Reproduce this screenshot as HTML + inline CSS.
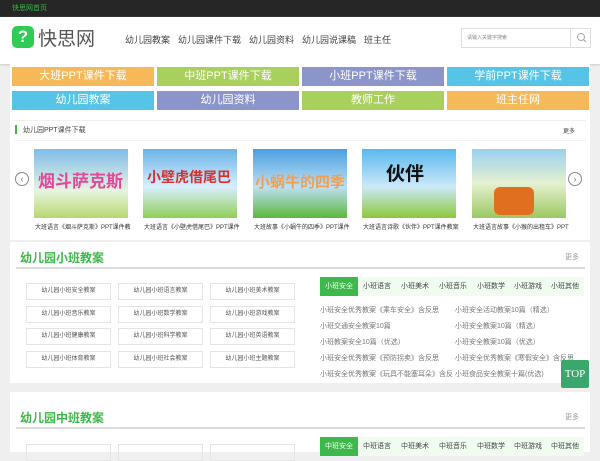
<!DOCTYPE html><html><head><meta charset="utf-8"><style>
*{margin:0;padding:0;box-sizing:border-box}
body{width:600px;height:450px;overflow:hidden;background:#efefef;font-family:"Liberation Sans","Noto Sans CJK SC",sans-serif;position:relative}
.a{position:absolute}
.top{left:0;top:0;width:600px;height:17px;background:#262626;color:#3bb54a;font-size:7px;line-height:17px;padding-left:12px}
.hd{left:0;top:17px;width:600px;height:47px;background:#fff;box-shadow:0 1px 2px #ccc}
.nav{font-size:9px;color:#444;top:33px}
.btn{height:19px;color:#fff;font-size:11px;line-height:19px;text-align:center;width:142px}
.panel{background:#fff;left:10px;width:580px}
.thumb{width:94px;height:69px;top:149px;overflow:hidden}
.cap{font-size:6px;color:#333;top:222px;width:110px}
.lb{width:85px;height:17px;border:1px solid #e4e4e4;font-size:6px;color:#555;text-align:center;line-height:15px}
.tab{font-size:7px;color:#444;line-height:19px}
.li{font-size:7px;color:#777}
.h2{font-size:12px;color:#3cb94a;font-weight:bold}
</style></head><body>
<div class="a top">快思网首页</div>
<div class="a hd"></div>
<div class="a" style="left:12px;top:26px;width:22px;height:22px;background:#2ecc55;border-radius:5px;color:#fff;font-weight:bold;font-size:17px;text-align:center;line-height:22px">?</div>
<div class="a" style="left:38px;top:24px;font-size:19px;color:#555">快思网</div>
<div class="a nav" style="left:125px">幼儿园教案</div>
<div class="a nav" style="left:178px">幼儿园课件下载</div>
<div class="a nav" style="left:249px">幼儿园资料</div>
<div class="a nav" style="left:302px">幼儿园说课稿</div>
<div class="a nav" style="left:364px">班主任</div>
<div class="a" style="left:461px;top:28px;width:130px;height:20px;border:1px solid #ddd;font-size:5px;color:#888;line-height:18px;padding-left:5px">请输入关键字搜索</div>
<div class="a" style="left:570px;top:28px;width:1px;height:20px;background:#ddd"></div>
<svg class="a" style="left:576px;top:32px" width="11" height="11"><circle cx="5" cy="5" r="3.5" fill="none" stroke="#aaa"/><line x1="7.5" y1="7.5" x2="10" y2="10" stroke="#aaa"/></svg>
<div class="a panel" style="top:64px;height:176px"></div>
<div class="a btn" style="left:12px;top:67px;background:#f5b95a">大班PPT课件下载</div>
<div class="a btn" style="left:157px;top:67px;background:#a9cf5c">中班PPT课件下载</div>
<div class="a btn" style="left:302px;top:67px;background:#8c95c9">小班PPT课件下载</div>
<div class="a btn" style="left:447px;top:67px;background:#55c4e6">学前PPT课件下载</div>
<div class="a btn" style="left:12px;top:91px;background:#55c4e6">幼儿园教案</div>
<div class="a btn" style="left:157px;top:91px;background:#8c95c9">幼儿园资料</div>
<div class="a btn" style="left:302px;top:91px;background:#a9cf5c">教师工作</div>
<div class="a btn" style="left:447px;top:91px;background:#f5b95a">班主任网</div>
<div class="a" style="left:14px;top:120px;width:572px;height:1px;background:#f0f0f0"></div>
<div class="a" style="left:15px;top:125px;width:2px;height:9px;background:#3cb94a"></div>
<div class="a" style="left:23px;top:125px;font-size:7px;color:#444">幼儿园PPT课件下载</div>
<div class="a" style="left:563px;top:126px;font-size:6px;color:#444">更多</div>
<div class="a" style="left:14px;top:140px;width:572px;height:1px;background:#f2f2f2"></div>
<div class="a thumb" style="left:34px;background:linear-gradient(#7fbde8,#e8f4e0 60%,#b8d870)"><div style="color:#e5489a;font-size:17px;font-weight:bold;margin:18px 0 0 4px">烟斗萨克斯</div></div>
<div class="a thumb" style="left:143px;background:linear-gradient(#6ab4e6,#d8efff 55%,#8fcf58)"><div style="color:#d8302a;font-size:14px;font-weight:bold;margin:18px 0 0 4px">小壁虎借尾巴</div></div>
<div class="a thumb" style="left:253px;background:linear-gradient(#4a9fe0,#bde0f5 55%,#5cb83a)"><div style="color:#f0a050;font-size:15px;font-weight:bold;margin:22px 0 0 2px">小蜗牛的四季</div></div>
<div class="a thumb" style="left:362px;background:linear-gradient(#5ab8ee,#cce9f8 55%,#8cc83a)"><div style="color:#111;font-size:19px;font-weight:bold;margin:10px 0 0 24px">伙伴</div></div>
<div class="a thumb" style="left:472px;background:linear-gradient(#9ad0f0,#e6f0d0 50%,#9cc860)"><div style="margin:38px 0 0 22px;width:40px;height:28px;background:#e07020;border-radius:6px"></div></div>
<div class="a cap" style="left:35px">大班语言《烟斗萨克斯》PPT课件教</div>
<div class="a cap" style="left:144px">大班语言《小壁虎借尾巴》PPT课件</div>
<div class="a cap" style="left:254px">大班故事《小蜗牛的四季》PPT课件</div>
<div class="a cap" style="left:363px">大班语言诗歌《伙伴》PPT课件教案</div>
<div class="a cap" style="left:473px">大班语言故事《小猴的出租车》PPT</div>
<div class="a" style="left:15px;top:172px;width:14px;height:14px;border:1px solid #888;border-radius:50%;font-size:9px;color:#777;text-align:center;line-height:12px">‹</div>
<div class="a" style="left:568px;top:172px;width:14px;height:14px;border:1px solid #888;border-radius:50%;font-size:9px;color:#777;text-align:center;line-height:12px">›</div>

<div class="a panel" style="top:242px;height:141px"></div>
<div class="a h2" style="left:20px;top:249px">幼儿园小班教案</div>
<div class="a" style="left:565px;top:252px;font-size:7px;color:#999">更多</div>
<div class="a" style="left:16px;top:267px;width:569px;height:2px;background:#ddd"></div>
<div class="a lb" style="left:26px;top:283px">幼儿园小班安全教案</div>
<div class="a lb" style="left:118px;top:283px">幼儿园小班语言教案</div>
<div class="a lb" style="left:210px;top:283px">幼儿园小班美术教案</div>
<div class="a lb" style="left:26px;top:306px">幼儿园小班音乐教案</div>
<div class="a lb" style="left:118px;top:306px">幼儿园小班数学教案</div>
<div class="a lb" style="left:210px;top:306px">幼儿园小班游戏教案</div>
<div class="a lb" style="left:26px;top:328px">幼儿园小班健康教案</div>
<div class="a lb" style="left:118px;top:328px">幼儿园小班科学教案</div>
<div class="a lb" style="left:210px;top:328px">幼儿园小班英语教案</div>
<div class="a lb" style="left:26px;top:351px">幼儿园小班体育教案</div>
<div class="a lb" style="left:118px;top:351px">幼儿园小班社会教案</div>
<div class="a lb" style="left:210px;top:351px">幼儿园小班主题教案</div>
<div class="a" style="left:320px;top:277px;width:264px;height:19px;background:#effcef"></div>
<div class="a tab" style="left:320px;top:277px;width:38px;background:#3cb94a;color:#fff;text-align:center">小班安全</div>
<div class="a tab" style="left:363px;top:277px">小班语言</div>
<div class="a tab" style="left:401px;top:277px">小班美术</div>
<div class="a tab" style="left:439px;top:277px">小班音乐</div>
<div class="a tab" style="left:477px;top:277px">小班数学</div>
<div class="a tab" style="left:514px;top:277px">小班游戏</div>
<div class="a tab" style="left:551px;top:277px">小班其他</div>
<div class="a li" style="left:320px;top:305px">小班安全优秀教案《乘车安全》含反思</div>
<div class="a li" style="left:455px;top:305px">小班安全活动教案10篇（精选）</div>
<div class="a li" style="left:320px;top:321px">小班交通安全教案10篇</div>
<div class="a li" style="left:455px;top:321px">小班安全教案10篇（精选）</div>
<div class="a li" style="left:320px;top:337px">小班教案安全10篇（优选）</div>
<div class="a li" style="left:455px;top:337px">小班安全教案10篇（优选）</div>
<div class="a li" style="left:320px;top:353px">小班安全优秀教案《预防拐卖》含反思</div>
<div class="a li" style="left:455px;top:353px">小班安全优秀教案《寒假安全》含反思</div>
<div class="a li" style="left:320px;top:369px">小班安全优秀教案《玩具不能塞耳朵》含反</div>
<div class="a li" style="left:455px;top:369px">小班食品安全教案十篇(优选)</div>
<div class="a" style="left:561px;top:360px;width:28px;height:28px;background:#3aa76d;color:#fff;font-family:'Liberation Serif',serif;font-size:11px;text-align:center;line-height:28px;border-radius:2px">TOP</div>

<div class="a panel" style="top:392px;height:60px"></div>
<div class="a h2" style="left:20px;top:409px">幼儿园中班教案</div>
<div class="a" style="left:565px;top:412px;font-size:7px;color:#999">更多</div>
<div class="a" style="left:16px;top:427px;width:569px;height:2px;background:#ddd"></div>
<div class="a lb" style="left:26px;top:444px"></div>
<div class="a lb" style="left:118px;top:444px"></div>
<div class="a lb" style="left:210px;top:444px"></div>
<div class="a" style="left:320px;top:437px;width:264px;height:19px;background:#effcef"></div>
<div class="a tab" style="left:320px;top:437px;width:38px;background:#3cb94a;color:#fff;text-align:center">中班安全</div>
<div class="a tab" style="left:363px;top:437px">中班语言</div>
<div class="a tab" style="left:401px;top:437px">中班美术</div>
<div class="a tab" style="left:439px;top:437px">中班音乐</div>
<div class="a tab" style="left:477px;top:437px">中班数学</div>
<div class="a tab" style="left:514px;top:437px">中班游戏</div>
<div class="a tab" style="left:551px;top:437px">中班其他</div>
</body></html>
